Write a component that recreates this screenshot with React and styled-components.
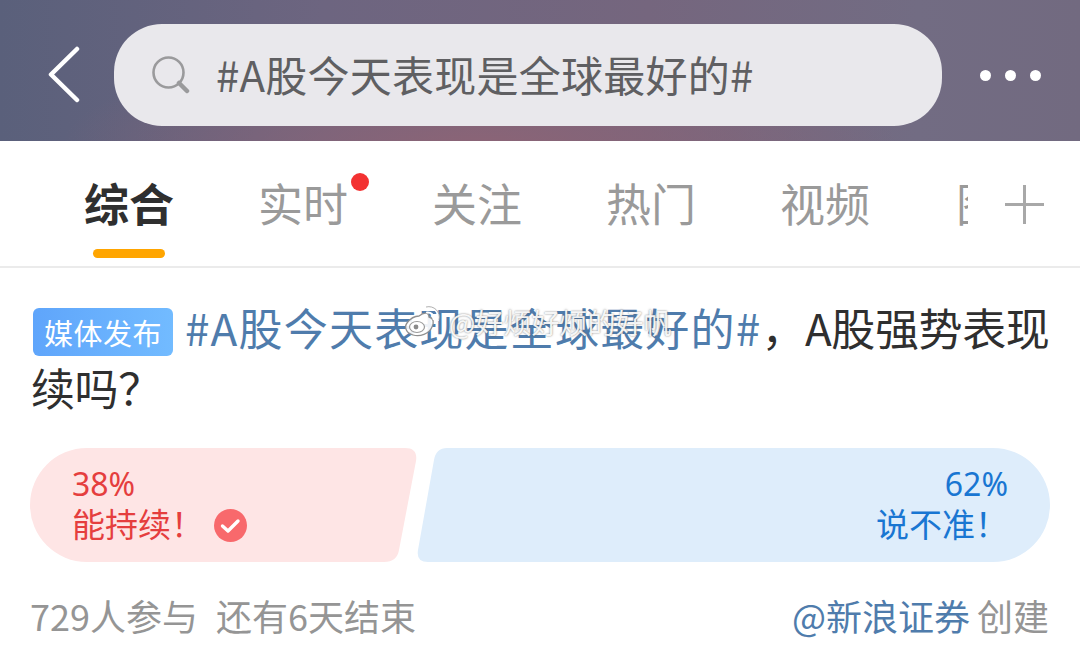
import React from 'react';
import styled, { createGlobalStyle } from 'styled-components';

const SANS = `"Noto Sans CJK SC", "Noto Sans", sans-serif`;

const GlobalStyle = createGlobalStyle`
  html, body { margin: 0; padding: 0; background: #fff; }
  body { font-family: ${SANS}; width: 1080px; height: 646px; overflow: hidden; }
`;

const Page = styled.div`
  width: 1080px;
  height: 646px;
  overflow: hidden;
  position: relative;
`;

const Header = styled.header`
  height: 141px;
  box-sizing: border-box;
  display: flex;
  align-items: center;
  padding: 9px 39px 0 47px;
  background:
    radial-gradient(ellipse 420px 110px at 480px 150px, #8c6476 0%, rgba(140, 100, 118, 0) 100%),
    linear-gradient(90deg, #5a607b 0%, #6d6580 30%, #75667e 60%, #726c83 85%, #726a80 100%);
`;

const BackButton = styled.div`
  width: 33px;
  height: 58px;
  flex: none;
  svg { display: block; }
`;

const SearchBar = styled.div`
  margin-left: 34px;
  width: 828px;
  height: 102px;
  border-radius: 48px;
  background: #e9e8ec;
  display: flex;
  align-items: center;
  padding-left: 38px;
  box-sizing: border-box;
`;

const SearchText = styled.span`
  margin-left: 26px;
  margin-top: -2px;
  font-size: 42px;
  line-height: 50px;
  letter-spacing: 0.25px;
  color: #5f5f62;
  white-space: nowrap;
`;

const Dots = styled.div`
  margin-left: auto;
  display: flex;
  gap: 14px;
`;

const Dot = styled.i`
  width: 11px;
  height: 11px;
  border-radius: 50%;
  background: #fff;
`;

const TabBar = styled.nav`
  height: 127px;
  box-sizing: border-box;
  border-bottom: 2px solid #ebebeb;
  display: flex;
  align-items: flex-start;
  padding-left: 84px;
  position: relative;
`;

const Tab = styled.div`
  width: ${(p) => p.$width || 174}px;
  flex: none;
  padding-top: 32px;
  font-size: 45px;
  line-height: 60px;
  font-weight: ${(p) => (p.$active ? 700 : 400)};
  color: ${(p) => (p.$active ? '#2f2f2f' : '#9a9a9a')};
  position: relative;
  white-space: nowrap;
`;

const Underline = styled.span`
  position: absolute;
  left: 9px;
  top: 108px;
  width: 72px;
  height: 9px;
  border-radius: 4.5px;
  background: #ffa500;
`;

const RedDot = styled.span`
  position: absolute;
  left: 93px;
  top: 32px;
  width: 18px;
  height: 18px;
  border-radius: 50%;
  background: #f33232;
`;

const ClippedTab = styled(Tab)`
  width: 12px;
  overflow: hidden;
`;

const Plus = styled.div`
  position: absolute;
  left: 1005px;
  top: 44px;
  width: 39px;
  height: 39px;
  svg { display: block; }
`;

const Content = styled.section`
  padding: 29px 20px 0 31px;
  position: relative;
`;

const Title = styled.div`
  font-size: 44px;
  line-height: 60px;
  color: #2f2f2f;
  height: 122px;
  width: 1024px;
  overflow: hidden;
  letter-spacing: -0.4px;
`;

const Badge = styled.span`
  display: inline-block;
  vertical-align: top;
  width: 140px;
  height: 48px;
  margin: 11px 12px 0 2px;
  border-radius: 6px;
  background: linear-gradient(90deg, #5fa5fb 0%, #72bbff 100%);
  color: #fff;
  font-size: 29px;
  line-height: 48px;
  text-align: center;
  letter-spacing: 0.5px;
`;

const TopicLink = styled.span`
  color: #4f7cac;
  letter-spacing: 1.2px;
`;

const Watermark = styled.div`
  position: absolute;
  left: 403px;
  top: 304px;
  display: flex;
  align-items: center;
  font-size: 28px;
  line-height: 36px;
  color: rgba(255, 255, 255, 0.92);
  text-shadow: 0 0 2px rgba(80, 80, 80, 0.75);
  white-space: nowrap;
  svg { display: block; flex: none; }
`;

const WatermarkName = styled.span`
  margin-left: 8px;
`;

const VoteRow = styled.div`
  margin-top: 29px;
  display: flex;
  height: 114px;
  width: 1020px;
  margin-left: -1px;
  position: relative;
`;

const VoteShape = styled.svg`
  position: absolute;
  left: 0;
  top: 0;
`;

const VoteLabel = styled.div`
  position: relative;
  flex: 1;
  box-sizing: border-box;
  padding: ${(p) => (p.$side === 'right' ? '17px 42px 0 0' : '17px 0 0 42px')};
  text-align: ${(p) => (p.$side === 'right' ? 'right' : 'left')};
  color: ${(p) => (p.$side === 'right' ? '#1976d2' : '#e53e3e')};
  font-size: 33px;
  line-height: 40px;
`;

const Percent = styled.div`
  font-family: "Noto Sans", sans-serif;
  font-size: 32px;
  line-height: 38px;
`;

const LabelLine = styled.div`
  display: flex;
  align-items: center;
  justify-content: ${(p) => (p.$side === 'right' ? 'flex-end' : 'flex-start')};
`;

const Check = styled.svg`
  margin-left: 10px;
  margin-top: 4px;
  flex: none;
`;

const Footer = styled.div`
  margin-top: 28px;
  display: flex;
  justify-content: space-between;
  width: 1019px;
  margin-left: -1px;
  font-size: 36px;
  line-height: 50px;
  color: #959595;
  white-space: nowrap;
`;

const FooterLeft = styled.div`
  display: flex;
  gap: 18px;
`;

const Creator = styled.span`
  color: #4f7cac;
  margin-right: 7px;
`;

export default function App() {
  return (
    <Page>
      <GlobalStyle />
      <Header>
        <BackButton>
          <svg width="33" height="58" viewBox="0 0 33 58" fill="none">
            <path d="M30 3 L4 28.5 L30 54" stroke="#fff" strokeWidth="4.5" strokeLinecap="round" strokeLinejoin="round" />
          </svg>
        </BackButton>
        <SearchBar>
          <svg width="38" height="38" viewBox="0 0 38 38" fill="none">
            <circle cx="16.5" cy="16.5" r="15" stroke="#9a9a9c" strokeWidth="2.6" />
            <path d="M27 27 L35 35" stroke="#9a9a9c" strokeWidth="4.5" strokeLinecap="round" />
          </svg>
          <SearchText>#A股今天表现是全球最好的#</SearchText>
        </SearchBar>
        <Dots>
          <Dot />
          <Dot />
          <Dot />
        </Dots>
      </Header>

      <TabBar>
        <Tab $active $width={174}>
          综合
          <Underline />
        </Tab>
        <Tab $width={174}>
          实时
          <RedDot />
        </Tab>
        <Tab $width={174}>关注</Tab>
        <Tab $width={174}>热门</Tab>
        <Tab $width={176}>视频</Tab>
        <ClippedTab>图片</ClippedTab>
        <Plus>
          <svg width="39" height="39" viewBox="0 0 39 39" fill="none">
            <path d="M0 19.5 H39 M19.5 0 V39" stroke="#a8a8a8" strokeWidth="3" />
          </svg>
        </Plus>
      </TabBar>

      <Content>
        <Title>
          <Badge>媒体发布</Badge>
          <TopicLink>#A股今天表现是全球最好的#</TopicLink>，A股强势表现续吗？
        </Title>

        <VoteRow>
          <VoteShape width="1020" height="114" viewBox="0 0 1020 114">
            <path
              d="M57 0 H375 Q388 0 386 13 L369 102 Q367 114 354 114 H57 A57 57 0 0 1 57 0 Z"
              fill="#fee5e5"
            />
            <path
              d="M417 0 H963 A57 57 0 0 1 963 114 H398 Q386 114 388 102 L404 12 Q406 0 417 0 Z"
              fill="#deedfb"
            />
          </VoteShape>
          <VoteLabel $side="left">
            <Percent>38%</Percent>
            <LabelLine>
              能持续！
              <Check width="33" height="33" viewBox="0 0 33 33">
                <circle cx="16.5" cy="16.5" r="16.5" fill="#f8696c" />
                <path d="M8.5 17 L14 22 L24 12" fill="none" stroke="#fff" strokeWidth="3.4" strokeLinecap="round" strokeLinejoin="round" />
              </Check>
            </LabelLine>
          </VoteLabel>
          <VoteLabel $side="right">
            <Percent>62%</Percent>
            <LabelLine $side="right">说不准！</LabelLine>
          </VoteLabel>
        </VoteRow>

        <Footer>
          <FooterLeft>
            <span>729人参与</span>
            <span>还有6天结束</span>
          </FooterLeft>
          <div>
            <Creator>@新浪证券</Creator>创建
          </div>
        </Footer>
      </Content>

      <Watermark>
        <svg width="38" height="34" viewBox="0 0 38 34" fill="none">
          <path d="M16 11 C21 7 26 7 26 12 C31 13 31 18 29 22 C26 29 17 32 10 30 C3 28 1 22 4 18 C7 14 11 11 16 11 Z" fill="rgba(255,255,255,0.9)" stroke="#8f8f8f" strokeWidth="1.3" />
          <ellipse cx="14" cy="22" rx="7.5" ry="5.5" fill="#fff" stroke="#9a9a9a" strokeWidth="1.2" />
          <circle cx="13" cy="22" r="2.4" fill="#8a8a8a" />
          <path d="M23 3 C31 1 37 8 35 15 M24 7.5 C28 7 31 10 30.5 14" stroke="#fff" strokeWidth="2" strokeLinecap="round" />
          <path d="M23 2 C31 0 38 7 36 15" stroke="#9a9a9a" strokeWidth="0.8" />
        </svg>
        <WatermarkName>@好烦好烦的好帆</WatermarkName>
      </Watermark>
    </Page>
  );
}
